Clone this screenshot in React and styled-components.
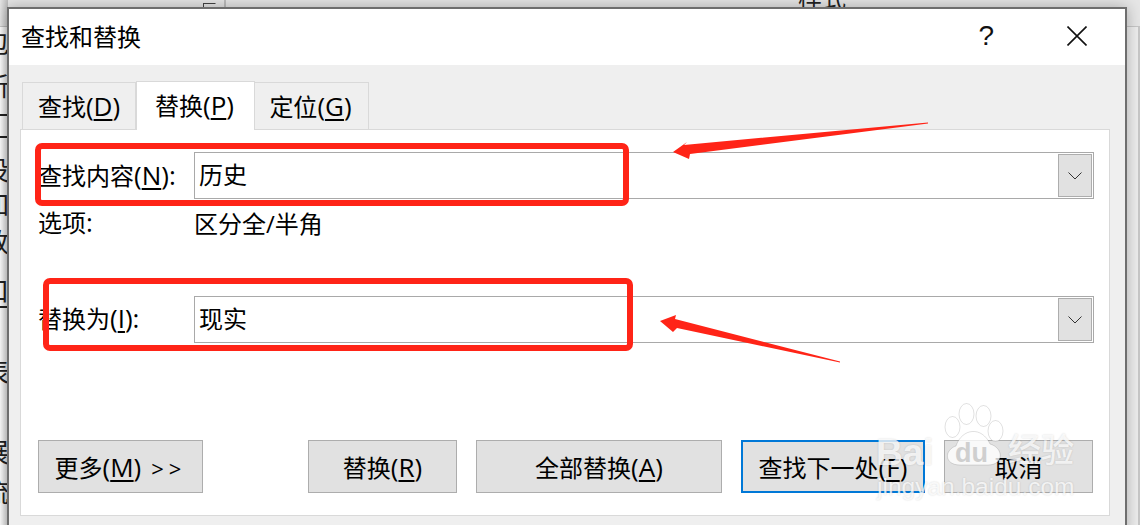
import React from "react";
import styled, { createGlobalStyle } from "styled-components";

const GlobalStyle = createGlobalStyle`
  html, body {
    margin: 0;
    padding: 0;
    background: #fff;
    overflow: hidden;
  }
  body {
    font-family: "Open Sans", "Noto Sans CJK SC", sans-serif;
    color: #000;
  }
`;

const Page = styled.div`
  position: relative;
  width: 1140px;
  height: 525px;
  overflow: hidden;
`;

/* the Word window behind the dialog */
const Ribbon = styled.div`
  display: flex;
  height: 27px;
  box-sizing: border-box;
  padding-left: 203px;
  background: #e6e6e6;
  border-bottom: 1px solid #c6c6c6;
  overflow: hidden;
`;
const RibbonBox = styled.div`
  width: 13px;
  height: 12px;
  margin-top: 3px;
  box-sizing: border-box;
  border: 1px solid #444;
  border-right-color: #e6e6e6;
  border-bottom-color: #e6e6e6;
`;
const RibbonDivider = styled.div`
  width: 2px;
  margin-left: 8px;
  background: #bdbdbd;
`;
const RibbonLabel = styled.div`
  margin: -14px 0 0 572px;
  font-size: 24px;
  line-height: 24px;
  color: #222;
`;
const DocText = styled.div`
  display: flex;
  flex-direction: column;
  width: 7px;
  overflow: hidden;
`;
const DocGlyph = styled.div`
  flex: none;
  width: 24px;
  height: 28px;
  margin-left: -17px;
  margin-top: ${(p) => p.$gap}px;
  font-size: 26px;
  line-height: 28px;
  color: #222;
`;
const SideShade = styled.div`
  position: absolute;
  left: 0;
  top: 0;
  width: 8px;
  height: 100%;
  background: linear-gradient(to right, rgba(0, 0, 0, 0), rgba(0, 0, 0, 0.18));
`;
const RightEdge = styled.div`
  position: absolute;
  right: 0;
  top: 27px;
  bottom: 0;
  width: 15px;
  box-sizing: border-box;
  background: #ededed;
  border-right: 2px solid #c8c8c8;
`;

/* dialog */
const Dialog = styled.div`
  position: absolute;
  left: 7px;
  top: 7px;
  width: 1120px;
  height: 530px;
  box-sizing: border-box;
  border: 2px solid #6e6e6e;
  background: #efefef;
  box-shadow: 0 0 14px rgba(0, 0, 0, 0.28);
  display: flex;
  flex-direction: column;
`;
const TitleBar = styled.div`
  display: flex;
  align-items: center;
  height: 56px;
  flex: none;
  background: #fff;
  padding: 0 38px 2px 12px;
  box-sizing: border-box;
`;
const Title = styled.div`
  font-size: 24px;
  line-height: 54px;
  margin-top: 2px;
  flex: 1;
`;
const HelpMark = styled.div`
  font-family: "Liberation Sans", sans-serif;
  font-size: 28px;
  line-height: 54px;
  margin-right: 73px;
  color: #111;
`;
const Body = styled.div`
  padding: 15px 15px 0 11px;
`;
const Tabs = styled.div`
  display: flex;
  align-items: flex-end;
  height: 49px;
  padding-left: 2px;
`;
const Tab = styled.div`
  box-sizing: border-box;
  width: ${(p) => p.$width}px;
  height: ${(p) => (p.$active ? 49 : 47)}px;
  margin-bottom: ${(p) => (p.$active ? -1 : 0)}px;
  padding-right: ${(p) => (p.$first ? 0 : 2)}px;
  position: relative;
  background: ${(p) => (p.$active ? "#fff" : "#efefef")};
  border: 1px solid #d9d9d9;
  border-bottom: none;
  border-left: ${(p) => (p.$first || p.$active ? "1px solid #d9d9d9" : "none")};
  text-align: center;
  font-size: 24px;
  line-height: 48px;
  white-space: nowrap;
`;
const Panel = styled.div`
  box-sizing: border-box;
  width: 1090px;
  height: 387px;
  background: #fff;
  border: 1px solid #d9d9d9;
  padding: 22px 15px 0 17px;
`;
const FieldRow = styled.div`
  display: flex;
  align-items: center;
  height: 47px;
`;
const Label = styled.div`
  width: 156px;
  flex: none;
  font-size: 24px;
  line-height: 47px;
  white-space: nowrap;
  margin-top: ${(p) => p.$shift || 0}px;
`;
const Combo = styled.div`
  flex: 1;
  height: 47px;
  box-sizing: border-box;
  display: flex;
  align-items: center;
  justify-content: space-between;
  border: 1px solid #a9a9a9;
  background: #fff;
  padding: 1px;
`;
const ComboText = styled.div`
  padding-left: 3px;
  margin-top: -2px;
  font-size: 24px;
  line-height: 40px;
`;
const ComboArrow = styled.div`
  width: 34px;
  height: 43px;
  box-sizing: border-box;
  display: flex;
  align-items: center;
  justify-content: center;
  background: #e1e1e1;
  border: 1px solid #adadad;
`;
const OptionRow = styled.div`
  display: flex;
  height: 50px;
  margin-bottom: 47px;
  font-size: 24px;
  line-height: 50px;
`;
const Buttons = styled.div`
  display: flex;
  gap: 19px;
  margin-top: 97px;
`;
const Button = styled.div`
  box-sizing: border-box;
  width: ${(p) => p.$width}px;
  height: 53px;
  margin-right: ${(p) => p.$push || 0}px;
  background: #e1e1e1;
  border: ${(p) => (p.$primary ? "2px solid #0078d7" : "1px solid #adadad")};
  text-align: center;
  font-size: 24px;
  line-height: ${(p) => (p.$primary ? 51 : 53)}px;
  white-space: nowrap;
`;
const Latin = styled.span`
  font-size: 26px;
  line-height: 1;
`;
const Key = styled.u`
  text-decoration-thickness: 2px;
  text-underline-offset: 3px;
`;
const Chevrons = styled.span`
  margin-left: 10px;
  letter-spacing: 5px;
  font-size: 22px;
`;

/* red marks drawn over the screenshot */
const RedBox = styled.div`
  position: absolute;
  left: ${(p) => p.$x}px;
  top: ${(p) => p.$y}px;
  width: ${(p) => p.$w}px;
  height: ${(p) => p.$h}px;
  box-sizing: border-box;
  border: 6px solid #ff2417;
  border-radius: 7px;
`;
const ArrowLayer = styled.svg`
  position: absolute;
  left: 0;
  top: 0;
  pointer-events: none;
`;

/* watermark */
const Watermark = styled.div`
  position: absolute;
  left: 872px;
  top: 400px;
  width: 210px;
  height: 105px;
  color: rgba(255, 255, 255, 0.78);
  text-shadow: 0 0 2px rgba(0, 0, 0, 0.16);
  pointer-events: none;
`;
const WmPaw = styled.svg`
  position: absolute;
  left: 0;
  top: 0;
`;
const WmBrand = styled.div`
  position: absolute;
  left: 4px;
  top: 25px;
  font-family: "Liberation Sans", sans-serif;
  font-weight: 700;
  font-size: 37px;
  line-height: 56px;
`;
const WmDu = styled.div`
  position: absolute;
  left: 83px;
  top: 37px;
  font-family: "Liberation Sans", sans-serif;
  font-weight: 700;
  font-size: 27px;
  line-height: 32px;
  color: #cfcfcf;
  text-shadow: none;
`;
const WmCn = styled.div`
  position: absolute;
  left: 136px;
  top: 28px;
  font-family: "Noto Sans CJK SC", sans-serif;
  font-weight: 500;
  font-size: 33px;
  line-height: 40px;
`;
const WmSite = styled.div`
  position: absolute;
  left: 5px;
  top: 72px;
  font-family: "Liberation Sans", sans-serif;
  font-size: 24.5px;
  line-height: 30px;
  white-space: nowrap;
`;

const docGlyphs = [
  ["包", 2],
  ["新", 15],
  ["一", 1],
  ["一", -6],
  ["设", 5],
  ["加", 6],
  ["放", 10],
  ["口", 21],
  ["一", -12],
  ["表", 37],
  ["展", 52],
  ["流", 12],
];

function ComboBox({ children }) {
  return (
    <Combo>
      <ComboText>{children}</ComboText>
      <ComboArrow>
        <svg width="14" height="8" viewBox="0 0 14 8">
          <path d="M0.5 0.5 L7 7 L13.5 0.5" fill="none" stroke="#333" strokeWidth="1" />
        </svg>
      </ComboArrow>
    </Combo>
  );
}

function Mnemonic({ letter, tail }) {
  return (
    <Latin>
      (<Key>{letter}</Key>){tail}
    </Latin>
  );
}

export default function App() {
  return (
    <Page>
      <GlobalStyle />
      <Ribbon>
        <RibbonBox />
        <RibbonDivider />
        <RibbonLabel>样式</RibbonLabel>
      </Ribbon>
      <DocText>
        {docGlyphs.map(([glyph, gap], i) => (
          <DocGlyph key={i} $gap={gap}>{glyph}</DocGlyph>
        ))}
      </DocText>
      <SideShade />
      <RightEdge />

      <Dialog>
        <TitleBar>
          <Title>查找和替换</Title>
          <HelpMark>?</HelpMark>
          <svg width="20" height="20" viewBox="0 0 20 20">
            <path d="M0.5 0.5 L19.5 19.5 M19.5 0.5 L0.5 19.5" fill="none" stroke="#111" strokeWidth="1.6" />
          </svg>
        </TitleBar>
        <Body>
          <Tabs>
            <Tab $width={114} $first>查找<Mnemonic letter="D" /></Tab>
            <Tab $width={119} $active>替换<Mnemonic letter="P" /></Tab>
            <Tab $width={114}>定位<Mnemonic letter="G" /></Tab>
          </Tabs>
          <Panel>
            <FieldRow>
              <Label>查找内容<Mnemonic letter="N" tail=":" /></Label>
              <ComboBox>历史</ComboBox>
            </FieldRow>
            <OptionRow>
              <Label>选项<Latin>:</Latin></Label>
              <div>区分全/半角</div>
            </OptionRow>
            <FieldRow>
              <Label $shift={-2}>替换为<Mnemonic letter="I" tail=":" /></Label>
              <ComboBox>现实</ComboBox>
            </FieldRow>
            <Buttons>
              <Button $width={165} $push={86}>更多<Mnemonic letter="M" /><Chevrons>&gt;&gt;</Chevrons></Button>
              <Button $width={149}>替换<Mnemonic letter="R" /></Button>
              <Button $width={246}>全部替换<Mnemonic letter="A" /></Button>
              <Button $width={184} $primary>查找下一处<Mnemonic letter="F" /></Button>
              <Button $width={149}>取消</Button>
            </Buttons>
          </Panel>
        </Body>
      </Dialog>

      <RedBox $x={35} $y={143} $w={594} $h={63} />
      <RedBox $x={43} $y={278} $w={590} $h={73} />
      <ArrowLayer width="1140" height="525" viewBox="0 0 1140 525">
        <path d="M673 152 L687 142 L684 145 L928 122.5 L928 123.5 L690 154 L689 159 Z" fill="#ff2417" />
        <path d="M660 321 L676 315 L675 319 L840 361.5 L840 362.5 L677 328 L673 332 Z" fill="#ff2417" />
      </ArrowLayer>

      <Watermark>
        <WmPaw width="210" height="105" viewBox="0 0 210 105">
          <g fill="rgba(255,255,255,0.78)" stroke="rgba(0,0,0,0.12)" strokeWidth="1">
            <ellipse cx="80.5" cy="27" rx="7.5" ry="10.5" />
            <ellipse cx="94.5" cy="14" rx="7.5" ry="10.5" />
            <ellipse cx="111.5" cy="16" rx="7.5" ry="10.5" />
            <ellipse cx="123.5" cy="31" rx="7.5" ry="10.5" />
            <path d="M84 46 C90 28 110 26 118 44 C132 48 132 65 116 65 L88 65 C72 65 72 50 84 46 Z" />
          </g>
        </WmPaw>
        <WmBrand>Bai</WmBrand>
        <WmDu>du</WmDu>
        <WmCn>经验</WmCn>
        <WmSite>jingyan.baidu.com</WmSite>
      </Watermark>
    </Page>
  );
}
